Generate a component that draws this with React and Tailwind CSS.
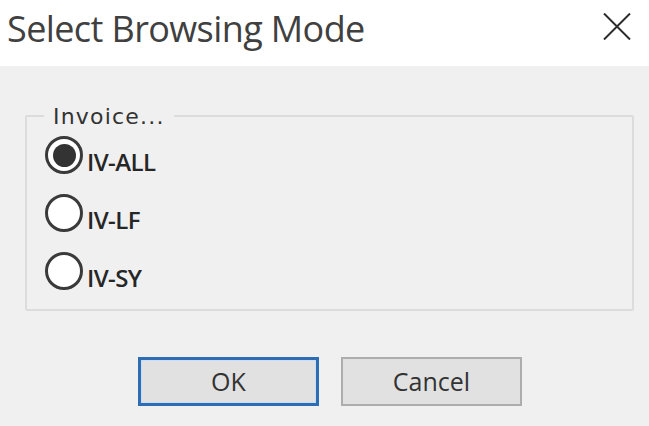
function Radio({ label, checked }) {
  return (
    <label className="flex items-start h-[38px]">
      <span className="w-[38px] h-[38px] shrink-0 rounded-full border-[3px] border-[#3a3a3a] bg-white flex items-center justify-center">
        {checked && <span className="w-[23px] h-[23px] rounded-full bg-[#333]" />}
      </span>
      <span className="ml-[4px] mt-[14px] leading-none text-[24px] font-semibold text-[#262626] tracking-[-0.6px] [font-family:'Open_Sans',sans-serif]">
        {label}
      </span>
    </label>
  );
}

export default function App() {
  return (
    <div className="w-[649px] h-[426px] bg-[#f0f0f0] flex flex-col [font-family:'Open_Sans',sans-serif]">
      {/* Title bar */}
      <div className="h-[66px] bg-white flex items-start justify-between pl-[7px] pr-[18px]">
        <span className="mt-[10px] leading-[37px] text-[36px] text-[#404040] tracking-[-0.6px]">Select Browsing Mode</span>
        <svg className="mt-[13px]" width="28" height="27" viewBox="0 0 28 27">
          <path d="M1 0.5 L27 26.5 M27 0.5 L1 26.5" stroke="#2b2b2b" strokeWidth="2" fill="none" />
        </svg>
      </div>

      {/* Group box */}
      <div className="relative mt-[49px] ml-[25px] mr-[15px] h-[196px] border-2 border-[#dcdcdc] rounded-[2px]">
        <span className="absolute top-[-11px] left-[17px] px-[9px] bg-[#f0f0f0] leading-none text-[22px] tracking-[1.2px] text-[#333] [font-family:'DejaVu_Sans',sans-serif]">
          Invoice...
        </span>
        <div className="flex flex-col gap-[20px] pl-[18px] pt-[19px]">
          <Radio label="IV-ALL" checked />
          <Radio label="IV-LF" />
          <Radio label="IV-SY" />
        </div>
      </div>

      {/* Buttons */}
      <div className="flex gap-[22px] ml-[138px] mt-[46px]">
        <button className="w-[181px] h-[49px] bg-[#e1e1e1] border-[3px] border-[#2e6db4] shadow-[inset_0_0_0_1px_#c9def5] text-[25px] text-[#333] [font-family:'Open_Sans',sans-serif]">
          OK
        </button>
        <button className="w-[181px] h-[49px] bg-[#e1e1e1] border-2 border-[#adadad] text-[25px] text-[#333] [font-family:'Open_Sans',sans-serif]">
          Cancel
        </button>
      </div>
    </div>
  );
}
